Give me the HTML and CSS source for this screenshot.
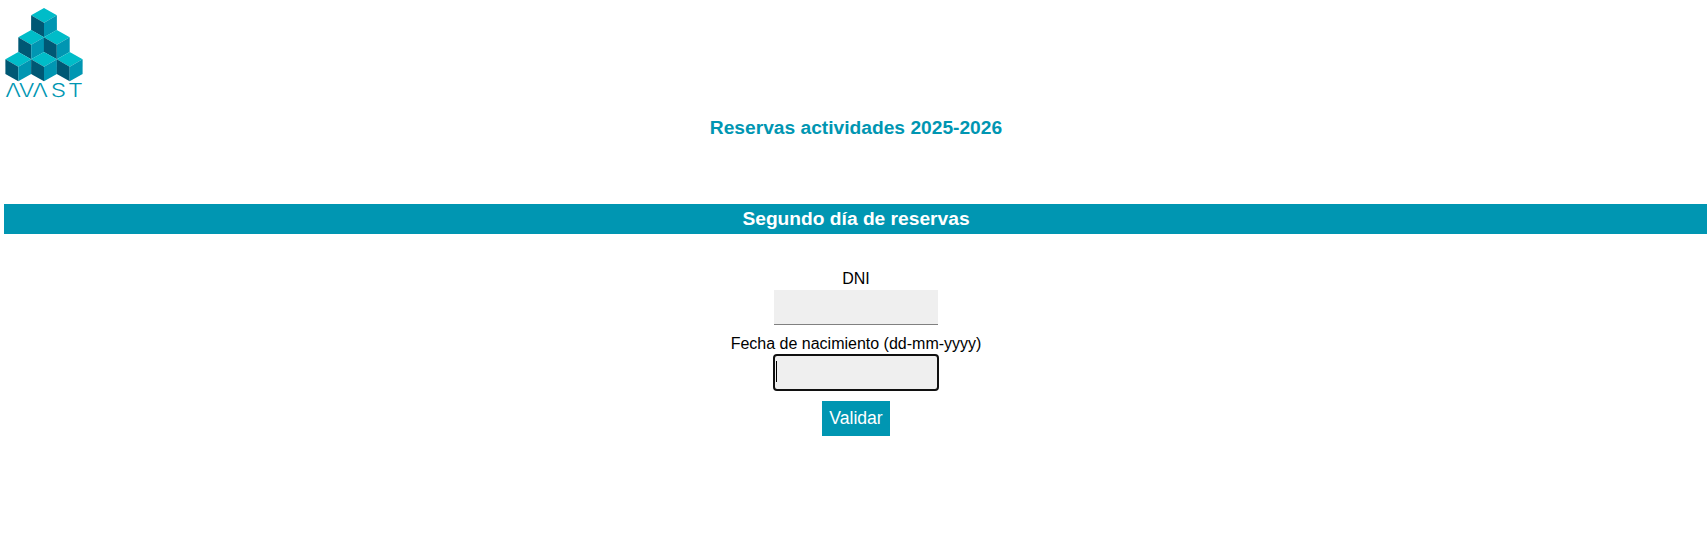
FILE: index.html
```html
<!DOCTYPE html>
<html lang="es">
<head>
<meta charset="utf-8">
<title>Reservas actividades</title>
<link rel="stylesheet" href="styles.css">
</head>
<body>
<header class="header">
<svg class="logo" viewBox="0 0 90 108" role="img" aria-label="AVAST">
<defs>
<g id="cube">
<path fill="#00bcc8" d="M0 0L12.9 7.3L0 14.7L-12.9 7.3Z"/>
<path fill="#005874" d="M-12.9 7.3L0 14.7V29.2L-12.9 22Z"/>
<path fill="#0096b2" d="M12.9 7.3L0 14.7V29.2L12.9 22Z"/>
</g>
</defs>
<use href="#cube" x="44" y="8"/>
<use href="#cube" x="31.2" y="30"/>
<use href="#cube" x="56.8" y="30"/>
<use href="#cube" x="18.3" y="52"/>
<use href="#cube" x="44" y="52"/>
<use href="#cube" x="69.7" y="52"/>
<g class="wordmark">
<text transform="translate(13.2 97) scale(1.3 1)">Λ</text>
<text transform="translate(26.6 97) scale(1.3 1)">V</text>
<text transform="translate(40 97) scale(1.3 1)">Λ</text>
<text transform="translate(58.3 97) scale(1.35 1)">S</text>
<text transform="translate(75.4 97) scale(1.3 1)">T</text>
</g>
</svg>
</header>
<main class="content">
<h1 class="title">Reservas actividades 2025-2026</h1>
<h2 class="banner">Segundo día de reservas</h2>
<form class="form">
<label class="label" for="dni">DNI</label>
<input class="field" id="dni" type="text">
<label class="label" for="birth">Fecha de nacimiento (dd-mm-yyyy)</label>
<div class="field field-active" id="birth"><span class="caret"></span></div>
<button class="submit" type="button">Validar</button>
</form>
</main>
</body>
</html>
```
FILE: styles.css
```css
body {
  margin: 0;
  background: #fff;
  color: #000;
  font-family: "Liberation Sans", Arial, sans-serif;
  font-size: 16px;
}
.header { height: 108px; }
.logo { display: block; width: 90px; height: 108px; }
.wordmark {
  font-family: Inter, sans-serif;
  font-size: 18px;
  font-weight: 300;
  fill: #0096b2;
  text-anchor: middle;
}
.content { margin-left: 4px; text-align: center; }
.title {
  box-sizing: border-box;
  height: 96px;
  margin: 0;
  padding: 5px 0 0 1px;
  color: #0096b2;
  font-size: 19.2px;
  line-height: 30px;
}
.banner {
  margin: 0;
  padding-left: 1px;
  background: #0096b2;
  color: #fff;
  font-size: 19.2px;
  line-height: 30px;
}
.form {
  display: flex;
  flex-direction: column;
  align-items: center;
  padding: 36px 0 0 1px;
}
.label { line-height: 18px; margin-bottom: 2px; }
.field {
  box-sizing: border-box;
  width: 164px;
  height: 35px;
  margin: 0 0 10px;
  padding: 0;
  border: 0;
  border-bottom: 1px solid #808080;
  background: #efefef;
}
.field-active {
  display: flex;
  align-items: flex-start;
  margin-bottom: 11px;
  padding: 6px 0 0 2px;
  border: 0;
  border-radius: 3px;
  outline: 2px solid #101010;
  outline-offset: -1px;
}
.caret { width: 1px; height: 21px; background: #000; }
.submit {
  width: 68px;
  height: 35px;
  padding: 0;
  border: 0;
  background: #0096b2;
  color: #fff;
  font: 17.6px "Liberation Sans", Arial, sans-serif;
}
```
